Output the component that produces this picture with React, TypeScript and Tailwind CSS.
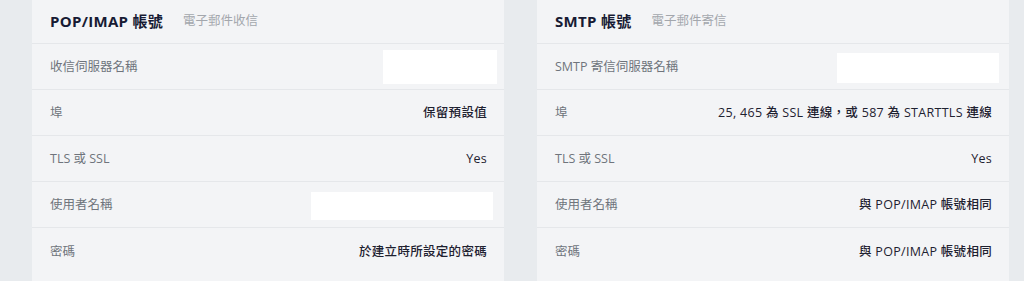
type Row = { label: string; value?: string; box?: string };

const pop: Row[] = [
  { label: "收信伺服器名稱", box: "w-[114px] h-[34px] -mr-[10px] -mt-[2px]" },
  { label: "埠", value: "保留預設值" },
  { label: "TLS 或 SSL", value: "Yes" },
  { label: "使用者名稱", box: "w-[182px] h-[28px] -mr-[6px] mt-[1px]" },
  { label: "密碼", value: "於建立時所設定的密碼" },
];

const smtp: Row[] = [
  { label: "SMTP 寄信伺服器名稱", box: "w-[162px] h-[30px] -mr-[7px] mt-[1px]" },
  { label: "埠", value: "25, 465 為 SSL 連線，或 587 為 STARTTLS 連線" },
  { label: "TLS 或 SSL", value: "Yes" },
  { label: "使用者名稱", value: "與 POP/IMAP 帳號相同" },
  { label: "密碼", value: "與 POP/IMAP 帳號相同" },
];

function Card({ title, sub, rows }: { title: string; sub: string; rows: Row[] }) {
  return (
    <div className="w-[472px] bg-[#f3f4f6]">
      <div className="flex h-[44px] items-center gap-[20px] border-b border-[#e5e7ea] pb-[1px] pl-[18px]">
        <span className="text-[15px] font-bold tracking-[0.3px] text-[#171b34]">{title}</span>
        <span className="text-[12.5px] text-[#a3a7ad]">{sub}</span>
      </div>
      {rows.map((r, i) => (
        <div
          key={r.label}
          className={`flex h-[46px] items-center justify-between pl-[18px] pr-[17px] pt-[2px] ${
            i < rows.length - 1 ? "border-b border-[#e5e7ea]" : ""
          }`}
        >
          <span className="text-[12.5px] text-[#6f747c]">{r.label}</span>
          {r.box ? (
            <div className={`bg-white ${r.box}`} />
          ) : (
            <span className="text-[12.5px] font-medium tracking-[0.3px] text-[#1e2130]">{r.value}</span>
          )}
        </div>
      ))}
    </div>
  );
}

export default function App() {
  return (
    <div
      className="flex h-[281px] w-[1024px] gap-[33px] bg-[#e8ebee] pl-[32px]"
      style={{ fontFamily: '"Open Sans", "Noto Sans CJK TC", sans-serif' }}
    >
      <Card title="POP/IMAP 帳號" sub="電子郵件收信" rows={pop} />
      <Card title="SMTP 帳號" sub="電子郵件寄信" rows={smtp} />
    </div>
  );
}
